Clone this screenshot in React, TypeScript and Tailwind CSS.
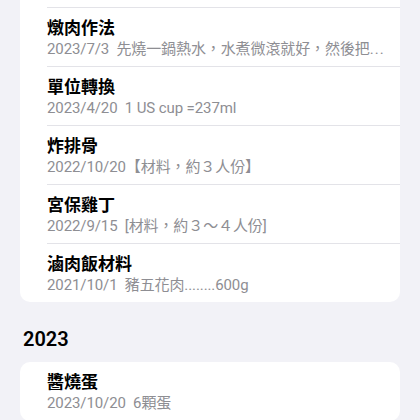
import React from "react";

const titleFont = {
  fontFamily: '"Inter", "Noto Sans CJK TC", "Noto Sans CJK SC", sans-serif',
};
const subFont = {
  fontFamily: 'Roboto, "Noto Sans CJK TC", "Noto Sans CJK SC", sans-serif',
};

type Item = { title: string; date: string; text: string; ellipsis?: boolean };

const group1: Item[] = [
  { title: "燉肉作法", date: "2023/7/3", text: "先燒一鍋熱水，水煮微滾就好，然後把", ellipsis: true },
  { title: "單位轉換", date: "2023/4/20", text: "1 US cup =237ml" },
  { title: "炸排骨", date: "2022/10/20", text: "【材料，約３人份】" },
  { title: "宮保雞丁", date: "2022/9/15", text: "[材料，約３～４人份]" },
  { title: "滷肉飯材料", date: "2021/10/1", text: "豬五花肉........600g" },
];

const group2: Item[] = [
  { title: "醬燒蛋", date: "2023/10/20", text: "6顆蛋" },
];

function Row({ item, last }: { item: Item; last: boolean }) {
  const sep = item.text.startsWith("【") ? "" : "\u00a0\u00a0";
  return (
    <div className="pl-[27px]">
      <div className={"pt-[10px] pb-[7px] pr-3 " + (last ? "" : "border-b border-[#e3e3e8]")}>
        <div className="text-[17px] leading-[20px] font-bold text-black" style={titleFont}>
          {item.title}
        </div>
        <div
          className="mt-[1px] text-[15px] leading-[20px] text-[#8e8e93] whitespace-nowrap tracking-[-0.1px]"
          style={subFont}
        >
          {item.date}
          {sep}
          {item.text}
          {item.ellipsis ? <span className="tracking-[1px]">...</span> : null}
        </div>
      </div>
    </div>
  );
}

export default function App() {
  return (
    <div className="w-[420px] h-[420px] overflow-hidden bg-[#f2f2f7]">
      <div className="mx-5 bg-white rounded-b-[10px]">
        <div className="pl-[27px]">
          <div className="h-[8px] border-b border-[#e3e3e8]" />
        </div>
        {group1.map((it, i) => (
          <Row key={i} item={it} last={i === group1.length - 1} />
        ))}
      </div>
      <div
        className="pl-[23px] mt-[25px] mb-[11px] text-[20px] leading-[24px] font-semibold text-black"
        style={subFont}
      >
        2023
      </div>
      <div className="mx-5 bg-white rounded-[10px]">
        {group2.map((it, i) => (
          <Row key={i} item={it} last={false} />
        ))}
      </div>
    </div>
  );
}
